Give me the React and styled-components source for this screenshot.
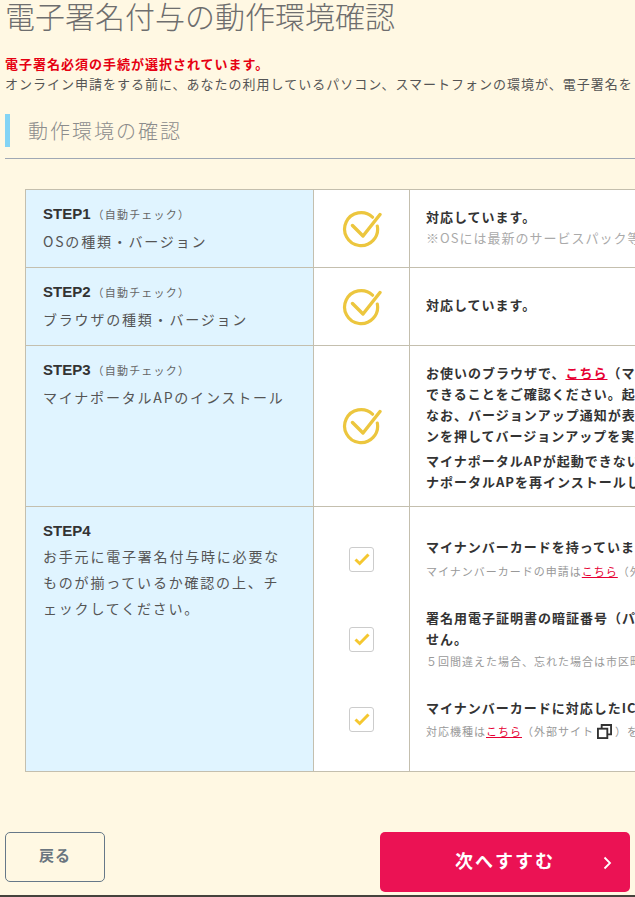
import styled, { createGlobalStyle } from "styled-components";

const GlobalStyle = createGlobalStyle`
  html, body {
    margin: 0;
    padding: 0;
    background: #fff8e3;
  }
  * {
    box-sizing: border-box;
  }
`;

const CircleCheck = () => (
  <BigIcon viewBox="0 0 40 38" fill="none">
    <path
      d="M35.3 16a16.5 16.5 0 1 1-4.8-8.8"
      stroke="#ecc63e"
      strokeWidth="3.2"
      strokeLinecap="round"
    />
    <path
      d="M10.5 15.5L21 26L38 4.5"
      stroke="#ecc63e"
      strokeWidth="3.4"
      strokeLinecap="round"
      strokeLinejoin="round"
    />
  </BigIcon>
);

const CheckBox = () => (
  <BoxWrap>
    <svg width="16" height="13" viewBox="0 0 16 13" fill="none">
      <path d="M1.5 6.5l4.2 4L14.5 1.5" stroke="#f5c72f" strokeWidth="3" />
    </svg>
  </BoxWrap>
);

const ExternalIcon = () => (
  <ExtSvg viewBox="0 0 16 16" fill="none" stroke="#333" strokeWidth="2">
    <rect x="1" y="5" width="10" height="10" />
    <path d="M5 5V1h10v10h-4" />
  </ExtSvg>
);

const App = () => {
  return (
    <Page>
      <GlobalStyle />
      <Title>電子署名付与の動作環境確認</Title>
      <Alert>電子署名必須の手続が選択されています。</Alert>
      <Lead>オンライン申請をする前に、あなたの利用しているパソコン、スマートフォンの環境が、電子署名を</Lead>
      <SectionHead>
        <SectionTitle>動作環境の確認</SectionTitle>
      </SectionHead>
      <Table>
        <colgroup>
          <col width="288" />
          <col width="96" />
          <col width="500" />
        </colgroup>
        <tbody>
          <Row h={78}>
            <StepCell>
              <StepName>STEP1<Auto>（自動チェック）</Auto></StepName>
              <StepText>OSの種類・バージョン</StepText>
            </StepCell>
            <IconCell><CircleCheck /></IconCell>
            <InfoCell pb={4}>
              <Strong>対応しています。</Strong>
              <Note>※OSには最新のサービスパック等</Note>
            </InfoCell>
          </Row>
          <Row h={78}>
            <StepCell>
              <StepName>STEP2<Auto>（自動チェック）</Auto></StepName>
              <StepText>ブラウザの種類・バージョン</StepText>
            </StepCell>
            <IconCell><CircleCheck /></IconCell>
            <InfoCell pb={4}>
              <Strong>対応しています。</Strong>
            </InfoCell>
          </Row>
          <Row h={161}>
            <StepCell>
              <StepName>STEP3<Auto>（自動チェック）</Auto></StepName>
              <StepText>マイナポータルAPのインストール</StepText>
            </StepCell>
            <IconCell><CircleCheck /></IconCell>
            <InfoCell pt={2}>
              <Strong>
                お使いのブラウザで、<RedLink>こちら</RedLink>（マイナポータル<br />
                できることをご確認ください。起動<br />
                なお、バージョンアップ通知が表示<br />
                ンを押してバージョンアップを実行
              </Strong>
              <StrongBlock>
                マイナポータルAPが起動できない場合<br />
                ナポータルAPを再インストールして
              </StrongBlock>
            </InfoCell>
          </Row>
          <Row h={265}>
            <StepCell>
              <StepName>STEP4</StepName>
              <StepLong>
                お手元に電子署名付与時に必要な<br />
                ものが揃っているか確認の上、チ<br />
                ェックしてください。
              </StepLong>
            </StepCell>
            <CheckCell>
              <CheckStack>
                <CheckBox />
                <CheckBox />
                <CheckBox />
              </CheckStack>
            </CheckCell>
            <ListCell>
              <ListItem>
                <Strong>マイナンバーカードを持っています</Strong>
                <Small gap={6}>マイナンバーカードの申請は<RedLink>こちら</RedLink>（外部サイト</Small>
              </ListItem>
              <ListItem>
                <Strong>署名用電子証明書の暗証番号（パスワ<br />せん。</Strong>
                <Small gap={4}>５回間違えた場合、忘れた場合は市区町村</Small>
              </ListItem>
              <ListItem>
                <Strong>マイナンバーカードに対応したICカード</Strong>
                <Small gap={5}>対応機種は<RedLink>こちら</RedLink>（外部サイト<ExternalIcon />）を</Small>
              </ListItem>
            </ListCell>
          </Row>
        </tbody>
      </Table>
      <Footer>
        <BackButton>戻る</BackButton>
        <NextButton>
          次へすすむ
          <Chevron width="9" height="14" viewBox="0 0 9 14" fill="none">
            <path d="M1.5 1.5L7 7l-5.5 5.5" stroke="#fff" strokeWidth="1.8" />
          </Chevron>
        </NextButton>
      </Footer>
    </Page>
  );
};

export default App;

const Page = styled.div`
  position: relative;
  width: 635px;
  height: 897px;
  overflow: hidden;
  padding-left: 5px;
  background: #fff8e3;
  border-bottom: 2px solid #45423c;
  font-family: "Noto Sans CJK JP", "Noto Sans", sans-serif;
  color: #333;
`;
const Title = styled.h1`
  margin: 0;
  height: 35px;
  font-size: 30px;
  line-height: 31px;
  font-weight: 300;
  color: #6e6e6e;
  white-space: nowrap;
`;
const Alert = styled.p`
  margin: 19px 0 0 0;
  font-size: 13px;
  line-height: 20px;
  font-weight: 700;
  letter-spacing: 1px;
  color: #e60012;
  white-space: nowrap;
`;
const Lead = styled.p`
  margin: 0;
  font-size: 13px;
  line-height: 20px;
  letter-spacing: 1px;
  color: #555;
  white-space: nowrap;
`;
const SectionHead = styled.div`
  margin-top: 20px;
  height: 45px;
  padding-bottom: 11px;
  border-bottom: 1px solid #a0a8b4;
  width: 700px;
`;
const SectionTitle = styled.h2`
  margin: 0;
  height: 33px;
  padding-left: 18px;
  border-left: 5px solid #83d4f5;
  font-size: 20px;
  line-height: 33px;
  font-weight: 300;
  letter-spacing: 2px;
  color: #8c8c8c;
`;
const Table = styled.table`
  margin: 30px 0 0 20px;
  width: 884px;
  table-layout: fixed;
  border-collapse: collapse;
  background: #fff;
`;
const Row = styled.tr`
  height: ${props => props.h}px;
`;
const StepCell = styled.td`
  vertical-align: top;
  padding: 12px 0 0 17px;
  background: #e0f4ff;
  border: 1px solid #c4bfae;
`;
const StepName = styled.div`
  font-family: "Liberation Sans", "Noto Sans CJK JP", sans-serif;
  font-size: 15px;
  line-height: 24px;
  font-weight: 700;
  color: #333;
`;
const Auto = styled.span`
  margin-left: 2px;
  font-family: "Noto Sans CJK JP", sans-serif;
  font-size: 11px;
  font-weight: 400;
  letter-spacing: 1.2px;
  color: #666;
`;
const StepText = styled.div`
  margin-top: 3px;
  font-size: 14px;
  line-height: 24px;
  letter-spacing: 1.8px;
  color: #555;
  white-space: nowrap;
`;
const StepLong = styled(StepText)`
  margin-top: 0;
  line-height: 26px;
`;
const IconCell = styled.td`
  text-align: center;
  vertical-align: middle;
  border: 1px solid #c4bfae;
`;
const CheckCell = styled(IconCell)`
  vertical-align: top;
`;
const BigIcon = styled.svg`
  display: block;
  width: 40px;
  height: 38px;
  margin: 0 auto;
`;
const CheckStack = styled.div`
  display: flex;
  flex-direction: column;
  align-items: center;
  gap: 55px;
  padding-top: 39px;
`;
const BoxWrap = styled.div`
  display: flex;
  align-items: center;
  justify-content: center;
  width: 25px;
  height: 25px;
  border: 1px solid #ccc;
  border-radius: 3px;
  background: #fff;
`;
const InfoCell = styled.td`
  padding: ${props => props.pt || 0}px 0 ${props => props.pb || 0}px 16px;
  vertical-align: middle;
  border: 1px solid #c4bfae;
  white-space: nowrap;
`;
const ListCell = styled(InfoCell)`
  vertical-align: top;
  padding-top: 29px;
`;
const Strong = styled.div`
  font-size: 13px;
  line-height: 21px;
  font-weight: 700;
  letter-spacing: 1px;
  color: #333;
`;
const StrongBlock = styled(Strong)`
  margin-top: 4px;
`;
const Note = styled.div`
  font-size: 13px;
  line-height: 21px;
  letter-spacing: 1px;
  color: #aaa;
`;
const Small = styled.div`
  margin-top: ${props => props.gap}px;
  height: 16px;
  font-size: 11px;
  line-height: 16px;
  letter-spacing: 1px;
  color: #999;
`;
const ListItem = styled.div`
  margin-bottom: 28px;
`;
const RedLink = styled.a`
  color: #e60033;
  text-decoration: underline;
`;
const ExtSvg = styled.svg`
  display: inline-block;
  width: 15px;
  height: 15px;
  margin: 0 3px;
  vertical-align: -3px;
`;
const Footer = styled.div`
  display: flex;
  align-items: flex-start;
  justify-content: space-between;
  width: 625px;
  margin-top: 60px;
`;
const BackButton = styled.button`
  width: 100px;
  height: 50px;
  padding: 0 0 5px 0;
  border: 1px solid #667888;
  border-radius: 5px;
  background: transparent;
  font-family: inherit;
  font-size: 15px;
  font-weight: 700;
  letter-spacing: 1px;
  color: #6b7680;
`;
const NextButton = styled.button`
  position: relative;
  width: 250px;
  height: 60px;
  padding: 0 0 4px 0;
  border: 0;
  border-radius: 5px;
  background: #eb1254;
  font-family: inherit;
  font-size: 18px;
  font-weight: 700;
  letter-spacing: 2px;
  color: #fff;
`;
const Chevron = styled.svg`
  position: absolute;
  right: 18px;
  top: 24px;
`;
